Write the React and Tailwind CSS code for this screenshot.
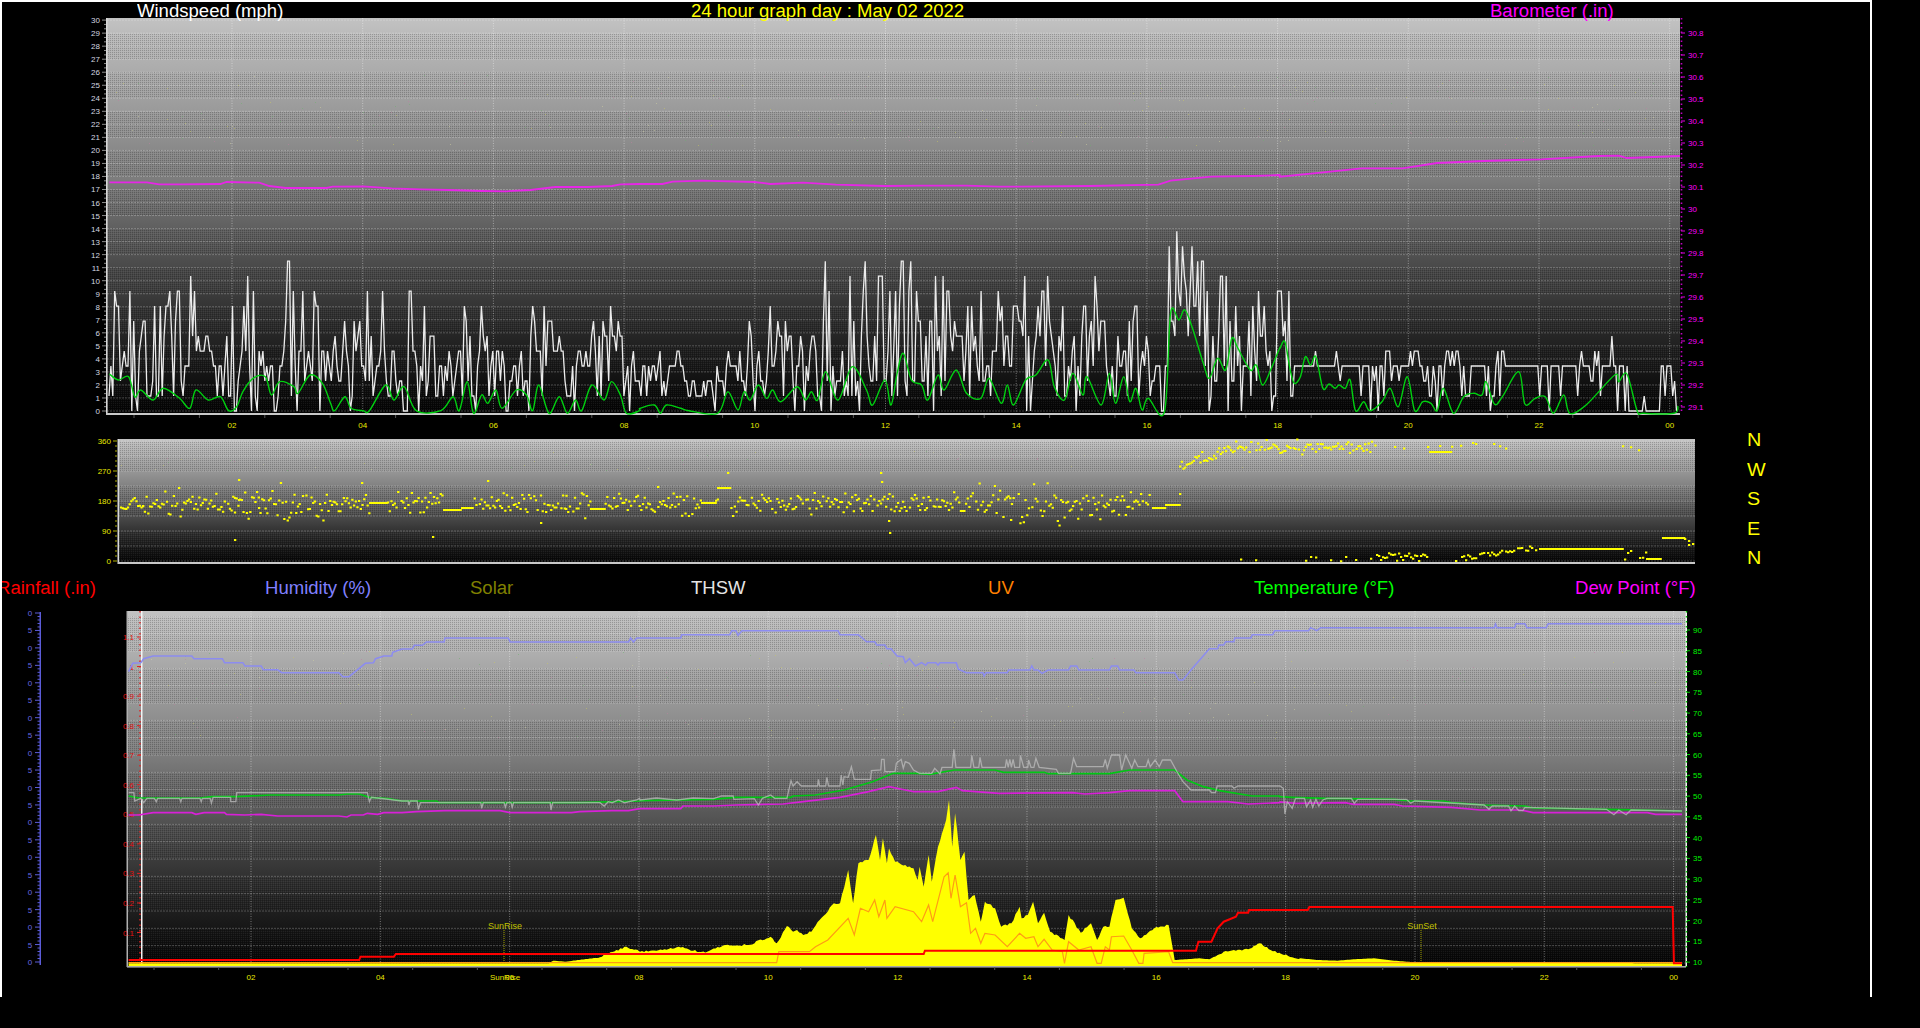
// 24 hour weather graph: wind / barometer, wind direction, and the temperature + solar panel.
// Series below were read off the picture, so they are stored in zoomed crop coordinates.
function crop(cx, cy, str) {
  return str
    .trim()
    .split(/\s+/)
    .map((p) => {
      const [a, b] = p.split(',').map(Number);
      return [cx + a / 2.45, cy + b / 3];
    });
}
const line = (pts) => pts.map(([x, y]) => `${x.toFixed(1)},${y.toFixed(1)}`).join(' ');

function rng(seed) {
  let a = seed;
  return () => {
    a = (a + 0x6d2b79f5) | 0;
    let t = Math.imul(a ^ (a >>> 15), 1 | a);
    t = (t + Math.imul(t ^ (t >>> 7), 61 | t)) ^ t;
    return ((t ^ (t >>> 14)) >>> 0) / 4294967296;
  };
}

// Catmull-Rom through the points, the average wind is a soft curve
function smooth(pts) {
  let d = `M${pts[0][0].toFixed(1)} ${pts[0][1].toFixed(1)}`;
  for (let i = 0; i < pts.length - 1; i++) {
    const p0 = pts[Math.max(0, i - 1)];
    const p1 = pts[i];
    const p2 = pts[i + 1];
    const p3 = pts[Math.min(pts.length - 1, i + 2)];
    const c1 = [p1[0] + (p2[0] - p0[0]) / 6, p1[1] + (p2[1] - p0[1]) / 6];
    const c2 = [p2[0] - (p3[0] - p1[0]) / 6, p2[1] - (p3[1] - p1[1]) / 6];
    d += `C${c1[0].toFixed(1)} ${c1[1].toFixed(1)} ${c2[0].toFixed(1)} ${c2[1].toFixed(1)} ${p2[0].toFixed(1)} ${p2[1].toFixed(1)}`;
  }
  return d;
}

// subdivide a long segment and jitter it, for the spiky solar outline
function roughen(pts, amp, seed) {
  const r = rng(seed);
  const out = [];
  for (let i = 0; i < pts.length - 1; i++) {
    const [x0, y0] = pts[i];
    const [x1, y1] = pts[i + 1];
    const n = Math.max(1, Math.round((x1 - x0) / 2));
    for (let k = 0; k < n; k++) {
      const t = k / n;
      const y = y0 + (y1 - y0) * t;
      const j = k === 0 || y > 958 ? 0 : (r() - 0.5) * amp;
      out.push([x0 + (x1 - x0) * t, y + j]);
    }
  }
  out.push(pts[pts.length - 1]);
  return out;
}

// top panel
const windAvg = [
  ...crop(0, 0, `268,1122 290,1140 315,1130 330,1190 345,1170 375,1200 400,1165 440,1195 465,1225 480,1170 510,1200 540,1190 560,1232 580,1220 595,1175 620,1135 650,1130 665,1185 685,1145 720,1160 730,1180 760,1125 790,1150 810,1210 820,1232 845,1190 860,1225 890,1232 905,1232 945,1155 965,1200 990,1160 1020,1232 1080,1232 1110,1190 1125,1232 1145,1145 1160,1240 1180,1185 1195,1210 1215,1170 1230,1225 1265,1170 1290,1185 1305,1232 1320,1155 1345,1240 1370,1190 1390,1240 1410,1200 1425,1232 1450,1155 1480,1200 1498,1145 1520,1185 1535,1240 1567,1232`),
  ...crop(640, 170, `0,715 35,705 50,730 65,705 100,715 120,722 190,730 215,665 240,720 255,665 270,690 290,645 310,685 325,660 345,695 385,650 405,690 420,665 435,690 455,605 485,690 520,590 555,660 570,705 600,630 615,705 630,610 645,550 665,630 690,645 705,690 730,615 745,660 775,600 800,670 835,685 855,625 885,700 900,645 915,705 945,630 970,615 1000,570 1015,650 1040,690 1060,610 1085,675 1095,620 1130,705 1150,610 1165,700 1185,620 1200,695 1215,655 1230,720 1245,685 1285,725 1300,430 1320,450 1335,420 1355,480 1380,580 1395,625 1415,565 1435,600 1450,505 1465,535 1495,600 1510,585 1525,645 1545,600 1567,535`),
  ...crop(1280, 0, `0,1045 12,1025 25,1110 35,1150 50,1130 62,1070 75,1095 88,1070 105,1165 120,1152 135,1165 145,1155 160,1165 172,1140 185,1232 205,1205 220,1232 250,1205 270,1165 290,1220 312,1130 330,1232 350,1205 370,1210 385,1232 400,1165 425,1240 450,1190 475,1180 495,1185 505,1145 525,1212 545,1190 585,1115 600,1212 625,1195 650,1190 670,1240 695,1185 710,1240 750,1215 820,1125 830,1145 850,1122 875,1232 890,1240 965,1240 975,1218`),
];
const baro = [
  ...crop(0, 0, `268,547 360,547 390,553 440,553 540,552 555,546 635,548 660,558 700,564 800,564 815,560 890,559 960,565 1030,568 1100,570 1180,573 1240,574 1300,570 1360,561 1440,561 1500,558 1520,553 1567,552`),
  ...crop(640, 170, `0,42 55,42 80,35 150,32 280,36 320,42 400,38 480,44 600,48 680,47 800,47 880,50 1100,48 1270,44 1300,32 1400,20 1500,18 1567,15`),
  ...crop(1280, 0, `0,530 100,518 200,505 300,505 385,489 500,483 640,478 780,468 830,467 850,474 980,468`),
];
// highest gust per half hour
const gustEnv = [11.5, 9.2, 10.4, 7, 10.4, 11.5, 9.2, 8.1, 9.2, 9.2, 5.8, 9.2, 8.1, 8.1, 5.8, 8.1, 4.6, 4.6, 3.45, 8.1, 8.1, 7, 12.6, 11.5, 12.6, 10.4, 9.2, 9.2, 11.5, 9.2, 10.4, 8.1, 15, 13.8, 11.5, 10.4, 10.4, 4.6, 3.45, 4.6, 4.6, 4.6, 4.6, 4.6, 3.45, 4.6, 5.8, 1.2];
const gusts = (() => {
  const r = rng(71);
  const out = [];
  let prev = 3.45;
  for (let x = 109; x < 1678; x += 1.9) {
    const h = (x - 101.2) / 65.37;
    let env = gustEnv[Math.min(47, Math.floor(h * 2))];
    if (h > 16 && h < 16.33) env = 4.6;
    if (h > 23.85) env = 3.45;
    const p = r();
    let v;
    if (h > 18.35 && h < 19.1) {
      // steady stretch with a few spikes
      v = p < 0.82 ? 3.45 : p < 0.92 ? 4.6 : 2.3;
    } else if (h >= 19.1) {
      v = p < 0.42 ? Math.min(env, 3.45) : p < 0.52 ? env : p < 0.8 ? r() * 2.3 : prev;
    } else if (p < 0.42) {
      v = env * (0.45 + 0.55 * r());
    } else if (p < 0.9) {
      v = r() * Math.min(4.6, env);
    } else {
      v = Math.min(prev, env);
    }
    v = Math.min(v, env);
    // the burst after 16:20 stays high
    if (h > 16.35 && h < 16.8) v = Math.max(v, 5.75 + r() * 3);
    if (h > 23.4 && h <= 23.85) v = r() < 0.04 ? 1.15 : 0;
    v = Math.round(v / 1.15) * 1.15;
    prev = v;
    out.push([x, 411 - 13.03 * v]);
  }
  return out;
})();

// middle panel: one yellow point per reading
const dirDots = (() => {
  const r = rng(9);
  const g = () => (r() + r() + r() - 1.5) / 0.5;
  const out = [];
  const flat = [
    [369, 386, 502],
    [443, 461, 509],
    [461, 472, 507],
    [590, 604, 508],
    [701, 715, 502],
    [717, 730, 487],
    [1152, 1165, 507],
    [1165, 1179, 504],
    [1429, 1451, 451],
    [1539, 1623, 548],
    [1646, 1660, 558],
    [1662, 1684, 537],
  ];
  const inFlat = (x) => flat.some(([a, b]) => x >= a && x <= b);
  for (let x = 120; x < 1150; x += 1.7) {
    if (inFlat(x) || r() < 0.06) continue;
    const spread = x > 240 && x < 330 ? 9 : x > 970 && x < 1100 ? 9.5 : 5.6;
    out.push([x, 503 + g() * spread]);
  }
  for (const [a, b, y] of flat) for (let x = a; x < b; x += 1.5) out.push([x, y]);
  for (let x = 1179; x < 1240; x += 1.7) out.push([x, 464 - ((x - 1179) / 61) * 20 + g() * 3]);
  for (let x = 1240; x < 1376; x += 1.7) if (r() > 0.15) out.push([x, 446 + g() * 3.2]);
  for (let x = 1376; x < 1528; x += 3) if (r() < 0.28) out.push([x, 442 + r() * 8]);
  for (let x = 1622; x < 1640; x += 4) if (r() < 0.5) out.push([x, 444 + r() * 6]);
  for (let x = 1230; x < 1265; x += 5) if (r() < 0.6) out.push([x, 558 + r() * 3]);
  for (let x = 1300; x < 1376; x += 5) if (r() < 0.5) out.push([x, 556 + r() * 5]);
  for (let x = 1376; x < 1428; x += 2) out.push([x, 561 - r() * (x > 1395 && x < 1410 ? 14 : 9)]);
  for (let x = 1455; x < 1538; x += 2) if (r() > 0.15) out.push([x, 561 - ((x - 1455) / 83) * 12 - r() * 5]);
  for (let x = 1624; x < 1646; x += 3) if (r() < 0.7) out.push([x, 561 - r() * 12]);
  out.push([1684, 538], [1688, 540], [1692, 543], [1688, 544]);
  const odd = [[142, 505], [178, 487], [234, 497], [234, 539], [238, 499], [238, 479], [258, 507], [361, 482], [432, 536], [487, 480], [565, 508], [540, 522], [657, 486], [727, 472], [880, 472], [881, 481], [889, 532], [888, 520], [1010, 519], [1179, 493]];
  return out.concat(odd);
})();
const dotsPath = dirDots.map(([x, y]) => `M${x.toFixed(1)} ${y.toFixed(1)}h2.3v2h-2.3z`).join('');

// bottom panel
const humidity = [
  ...crop(0, 420, `315,755 325,730 345,728 352,716 375,708 470,708 475,716 545,716 550,728 595,728 600,738 640,738 645,749 680,749 690,758 830,758 840,770 855,770 880,745 895,730 915,728 920,716 940,708 960,708 962,697 985,687 1010,687 1015,676 1035,676 1045,666 1088,666 1090,654 1245,654 1250,666 1540,666 1545,654 1552,666 1560,654 1567,654`),
  ...crop(640, 600, `0,114 100,114 102,104 220,104 225,92 235,92 240,106 250,92 485,92 490,104 535,104 555,125 575,125 580,135 600,135 605,146 615,146 630,168 645,170 650,188 660,176 675,198 690,188 700,196 705,188 725,188 730,195 735,188 775,188 780,208 800,218 840,218 843,228 848,218 900,218 903,210 955,210 960,198 965,210 975,210 985,220 1000,210 1050,210 1055,198 1070,198 1075,210 1150,210 1155,198 1170,198 1175,210 1210,210 1215,218 1310,218 1320,240 1330,240 1350,210 1360,196 1375,175 1395,146 1415,146 1418,135 1430,135 1435,125 1455,125 1457,114 1497,114 1500,104 1550,104 1555,92 1567,92`),
  ...crop(1280, 420, `0,632 70,632 75,623 90,632 100,623 525,623 528,612 532,623 575,623 578,611 600,611 605,623 652,623 657,611 985,611`),
];
const temp = [
  ...crop(0, 720, `315,228 340,234 490,234 520,230 580,230 660,225 830,225 850,222 880,222 905,232 950,236 985,243 1070,243 1075,248 1420,248 1567,243`),
  ...crop(640, 720, `0,242 180,238 230,232 370,232 375,228 430,225 500,210 570,185 620,160 680,160 710,163 770,150 870,150 890,157 990,157 1000,161 1150,161 1200,150 1310,150 1340,180 1380,200 1420,212 1500,228 1567,228`),
  ...crop(1280, 720, `0,230 30,232 110,235 280,238 320,243 400,243 420,248 500,255 600,258 620,264 800,268 890,270 985,273`),
];
const thsw = [
  ...crop(0, 720, `315,218 328,218 330,243 345,235 352,248 360,235 378,235 383,245 386,235 440,235 443,245 446,235 490,235 493,245 496,235 515,235 518,250 522,232 565,232 565,245 578,245 580,218 900,218 905,245 910,232 985,243 1000,243 1002,255 1005,243 1022,243 1025,268 1030,248 1178,248 1180,265 1184,248 1235,248 1238,262 1242,248 1252,248 1255,262 1258,248 1348,248 1350,270 1354,248 1470,248 1480,258 1490,245 1500,248 1515,240 1530,248 1560,240 1567,235`),
  ...crop(640, 720, `0,240 40,234 90,240 130,234 180,236 200,228 228,228 230,238 280,236 290,255 300,235 320,225 330,235 360,235 370,182 375,198 385,185 395,198 435,198 437,178 440,198 455,198 458,172 462,198 490,198 493,165 497,195 500,170 510,172 518,140 525,178 565,178 567,152 590,150 592,118 598,118 600,155 625,155 628,130 640,118 645,145 650,125 660,130 670,150 685,160 715,160 722,145 735,162 740,142 765,142 769,88 774,142 810,142 813,106 818,142 830,142 833,112 838,142 895,142 898,118 902,142 906,118 910,142 914,118 918,142 930,142 932,106 940,142 950,142 952,120 958,142 965,142 970,115 978,142 1020,148 1025,160 1055,160 1062,115 1070,140 1135,140 1140,118 1145,145 1155,105 1175,105 1180,150 1190,105 1205,145 1212,120 1220,140 1240,140 1245,120 1250,140 1262,120 1272,140 1280,120 1300,120 1320,165 1330,185 1350,210 1395,210 1400,218 1410,218 1414,198 1450,198 1455,205 1465,198 1567,198`),
  ...crop(1280, 720, `0,198 8,205 12,282 18,245 30,265 38,235 60,235 65,260 75,240 80,262 88,238 95,258 105,240 115,235 175,235 182,250 190,238 310,238 320,250 330,243 500,255 512,268 520,258 560,258 566,272 575,258 585,272 595,272 600,262 800,268 818,284 830,270 848,284 860,270 985,273`),
];
const dew = [
  ...crop(0, 720, `315,285 340,285 375,278 470,278 480,283 500,278 550,278 555,283 600,285 640,283 680,288 830,288 850,291 860,285 890,285 900,280 925,283 940,278 985,278 1020,275 1090,272 1225,272 1250,278 1400,278 1420,275 1500,272 1540,272 1567,266`),
  ...crop(640, 720, `0,266 100,266 105,258 180,258 235,255 350,252 400,245 490,232 560,215 610,200 650,210 670,215 730,215 775,202 790,212 880,220 1060,218 1090,222 1150,218 1200,212 1310,212 1330,245 1440,245 1490,252 1567,248`),
  ...crop(1280, 720, `0,246 40,250 160,248 180,253 280,253 300,258 420,262 490,270 590,270 620,278 900,278 920,283 985,283`),
];
const rain = [
  ...crop(0, 720, `315,720 880,720 883,710 965,710 970,702 1567,702`),
  ...crop(640, 720, `0,702 695,702 698,692 1362,692 1368,665 1400,665 1415,625 1430,605 1460,590 1465,578 1490,578 1492,570 1567,570`),
  ...crop(1280, 720, `0,570 68,570 72,561 962,561 965,730 985,730`),
];
const solar = roughen(
  [
    ...crop(0, 720, `315,738 315,730 1345,730 1355,722 1385,725 1470,712 1510,690 1535,680 1567,695`),
    ...crop(640, 720, `0,695 60,688 95,680 130,692 165,695 210,675 265,675 320,650 335,670 360,618 375,635 385,630 400,645 420,635 440,600 475,550 490,550 510,450 522,550 535,430 560,420 578,345 588,420 595,355 605,430 610,385 625,425 670,445 680,480 685,440 695,500 707,405 715,485 730,380 740,340 750,300 757,240 765,380 772,280 785,420 795,395 805,540 820,525 835,605 845,545 870,565 885,620 910,610 930,560 935,595 950,585 963,545 975,610 990,578 1005,635 1040,660 1050,585 1080,638 1105,610 1120,660 1135,620 1150,620 1165,540 1185,533 1205,625 1225,655 1260,625 1295,615 1310,720 1370,715 1395,718 1430,695 1490,688 1518,670 1545,690 1567,698`),
    ...crop(1280, 720, `0,700 30,712 90,720 140,722 180,718 230,715 280,722 330,727 985,730`),
  ],
  2.2,
  33
).concat(crop(1280, 720, `985,738`));
const uv = [
  ...crop(0, 720, `315,728 1567,728`),
  ...crop(640, 720, `0,728 335,728 340,695 415,695 430,680 460,660 510,595 525,645 540,565 560,575 575,540 585,590 600,540 605,595 625,560 670,575 690,605 707,555 717,605 745,470 755,458 762,535 772,465 785,560 800,548 810,640 822,625 835,670 845,640 870,645 900,680 930,640 945,655 965,650 975,680 990,658 1010,690 1035,695 1040,730 1050,665 1075,690 1105,680 1120,730 1130,730 1140,680 1150,690 1155,650 1185,648 1205,690 1222,730 1232,730 1235,700 1295,695 1305,728 1567,728`),
  ...crop(1280, 720, `0,728 985,728`),
];

const hours = ['02', '04', '06', '08', '10', '12', '14', '16', '18', '20', '22', '00'];
const range = (n) => Array.from({ length: n }, (_, i) => i);

function specks(seed, x, y, w, h, n) {
  const r = rng(seed);
  return range(n).map((i) => (
    <rect
      key={i}
      x={(x + r() * w).toFixed(0)}
      y={(y + r() * h).toFixed(0)}
      width="1"
      height="1"
      fill={['#c8c860', '#70b070', '#c080a0', '#d0d0a0'][i % 4]}
      opacity="0.55"
    />
  ));
}

// gradient background, dither bands and the grid of one plot
function Plot({ id, x, y, w, h, rows, vlines = [] }) {
  const bands = rows.slice(0, -1).map((r, i) => ({ y0: rows[i], y1: rows[i + 1], i }));
  return (
    <g>
      <defs>
        <linearGradient id={`${id}-bg`} x1="0" y1="0" x2="0" y2="1">
          <stop offset="0%" stopColor="#c2c2c2" />
          <stop offset="40%" stopColor="#7e7e7e" />
          <stop offset="60%" stopColor="#505050" />
          <stop offset="80%" stopColor="#262626" />
          <stop offset="100%" stopColor="#030303" />
        </linearGradient>
        <pattern id={`${id}-dots`} width="2" height="2" patternUnits="userSpaceOnUse">
          <rect width="1" height="1" fill="#000" opacity="0.2" />
          <rect x="1" y="1" width="1" height="1" fill="#fff" opacity="0.06" />
        </pattern>
      </defs>
      <rect x={x} y={y} width={w} height={h} fill={`url(#${id}-bg)`} />
      {bands.map((b) =>
        b.i % 3 !== 2 ? (
          <rect
            key={b.i}
            x={x}
            y={Math.min(b.y0, b.y1)}
            width={w}
            height={Math.abs(b.y1 - b.y0)}
            fill={`url(#${id}-dots)`}
          />
        ) : null
      )}
      {rows.map((ry, i) => (
        <line key={i} x1={x} x2={x + w} y1={ry} y2={ry} stroke="#fff" strokeOpacity="0.24" strokeDasharray="2 1" />
      ))}
      {vlines.map((vx, i) => (
        <line key={i} x1={vx} x2={vx} y1={y} y2={y + h} stroke="#fff" strokeOpacity="0.4" strokeDasharray="1 1.5" />
      ))}
    </g>
  );
}

function HourLabels({ at, y, color = '#e8e800' }) {
  return hours.map((t, i) => (
    <text key={i} x={at(i)} y={y} textAnchor="middle" fill={color} className="text-[8px]">
      {t}
    </text>
  ));
}

function WindPanel() {
  const rows = range(31).map((v) => 411 - 13.03 * v);
  const hx = (i) => 232 + 130.7 * i;
  return (
    <svg viewBox="2 18 1868 418" className="block h-[418px] w-[1868px] shrink-0">
      <Plot id="wind" x={107} y={18} w={1573} h={395} rows={rows} vlines={range(12).map(hx)} />
      {specks(4, 108, 75, 1570, 70, 260)}
      <rect x={106} y={18} width={1.6} height={397} fill="#d8d8d8" />
      <rect x={106} y={413} width={1574} height={2} fill="#c8c8c8" />
      {range(91).map((i) => (
        <line key={i} x1={i % 3 === 0 ? 102 : 104} x2={106} y1={411 - (13.03 / 3) * i} y2={411 - (13.03 / 3) * i} stroke="#8a8a8a" />
      ))}
      {range(24).map((i) => (
        <line key={i} x1={134 + 32.7 * 2 * i} x2={134 + 32.7 * 2 * i} y1={415} y2={418} stroke="#555" />
      ))}
      {range(31).map((v) => (
        <text key={v} x={100} y={411 - 13.03 * v + 3} textAnchor="end" fill="#d4d8e0" className="text-[8px]">
          {v}
        </text>
      ))}
      {['30.8', '30.7', '30.6', '30.5', '30.4', '30.3', '30.2', '30.1', '30', '29.9', '29.8', '29.7', '29.6', '29.5', '29.4', '29.3', '29.2', '29.1'].map((t, i) => (
        <g key={t}>
          <line x1={1681} x2={1685} y1={33 + 22 * i} y2={33 + 22 * i} stroke="#e000e0" />
          <text x={1688} y={36 + 22 * i} fill="#ff00ff" className="text-[8px]">
            {t}
          </text>
        </g>
      ))}
      <line x1={1681.5} x2={1681.5} y1={18} y2={413} stroke="#c000c0" strokeDasharray="1.5 3" strokeWidth="1.6" />
      <HourLabels at={hx} y={428} />
      <polyline points={line(gusts)} fill="none" stroke="#ececec" strokeWidth="1.3" />
      <path d={smooth(windAvg)} fill="none" stroke="#00d010" strokeWidth="1.4" />
      <polyline points={line(baro)} fill="none" stroke="#e626e6" strokeWidth="1.8" />
    </svg>
  );
}

function DirectionPanel() {
  const labels = [
    ['360', 441],
    ['270', 471],
    ['180', 501],
    ['90', 531],
    ['0', 561],
  ];
  const rows = range(9).map((i) => 561 - 15 * i);
  return (
    <svg viewBox="2 436 1740 136" className="block h-[136px] w-[1740px] shrink-0">
      <Plot id="dir" x={118} y={439} w={1577} h={124} rows={rows} />
      {specks(8, 119, 450, 1570, 20, 70)}
      <rect x={117.5} y={439} width={1.6} height={125} fill="#d8d8d8" />
      <rect x={118} y={562} width={1577} height={2} fill="#c8c8c8" />
      {range(25).map((i) => (
        <line key={i} x1={i % 6 === 0 ? 113 : 115} x2={117} y1={561 - 5 * i} y2={561 - 5 * i} stroke="#b0b000" />
      ))}
      {labels.map(([t, y]) => (
        <text key={t} x={111} y={y + 3} textAnchor="end" fill="#e8e800" className="text-[8px]">
          {t}
        </text>
      ))}
      <path d={dotsPath} fill="#ffff00" />
    </svg>
  );
}

function TempPanel() {
  const rows = range(21).map((i) => 963 - 17.33 * i);
  const hx = (i) => 251 + 129.33 * i;
  const rainLabels = ['1.1', '1', '0.9', '0.8', '0.7', '0.6', '0.5', '0.4', '0.3', '0.2', '0.1'];
  const tempLabels = range(17).map((i) => 90 - 5 * i);
  return (
    <svg viewBox="2 604 1868 385" className="block h-[385px] w-[1868px] shrink-0">
      <Plot id="temp" x={127} y={611} w={1559} h={356} rows={rows} vlines={range(12).map(hx)} />
      {specks(12, 128, 650, 1555, 90, 240)}
      <rect x={126.5} y={611} width={1.5} height={356} fill="#b0b0b0" />
      <rect x={127} y={966} width={1559} height={1.6} fill="#a8a8a8" />
      <rect x={141} y={611} width={1.5} height={354} fill="#f4f4f4" />
      <line x1={140} x2={140} y1={611} y2={965} stroke="#e02020" strokeDasharray="1.5 4" strokeWidth="1.4" />
      {rainLabels.map((t, i) => (
        <g key={t}>
          <line x1={137} x2={141} y1={637 + 29.55 * i} y2={637 + 29.55 * i} stroke="#e02020" />
          <text x={134} y={640 + 29.55 * i} textAnchor="end" fill="#e01010" className="text-[8px]">
            {t}
          </text>
        </g>
      ))}
      {/* humidity axis, the tens are cut off in the original */}
      <rect x={39.5} y={612} width={1.5} height={353} fill="#5c5cd8" />
      {range(101).map((i) => (
        <line key={i} x1={i % 5 === 0 ? 35 : 37.5} x2={40} y1={962 - 3.49 * i} y2={962 - 3.49 * i} stroke="#5c5cd8" />
      ))}
      {range(21).map((i) => (
        <text key={i} x={30} y={965 - 17.45 * i} textAnchor="middle" fill="#6a6ae0" className="text-[8px]">
          {i % 2 === 0 ? '0' : '5'}
        </text>
      ))}
      <rect x={1685.5} y={611} width={1.5} height={356} fill="#f0f0f0" />
      <line x1={1686.5} x2={1686.5} y1={611} y2={967} stroke="#00d000" strokeDasharray="1.5 3.5" strokeWidth="1.4" />
      {tempLabels.map((t, i) => (
        <g key={t}>
          <line x1={1687} x2={1690} y1={630 + 20.76 * i} y2={630 + 20.76 * i} stroke="#00d000" />
          <text x={1693} y={633 + 20.76 * i} fill="#00f000" className="text-[8px]">
            {t}
          </text>
        </g>
      ))}
      {range(24).map((i) => (
        <line key={i} x1={154 + 64.67 * i} x2={154 + 64.67 * i} y1={967} y2={970} stroke="#555" />
      ))}
      <HourLabels at={hx} y={980} />
      <text x={505} y={980} textAnchor="middle" fill="#e8e800" className="text-[8px]">
        SunRise
      </text>
      <line x1={504} x2={504} y1={930} y2={965} stroke="#a0a000" strokeDasharray="1 1" />
      <line x1={1421} x2={1421} y1={930} y2={965} stroke="#a0a000" strokeDasharray="1 1" />
      <text x={505} y={929} textAnchor="middle" fill="#c0c000" className="text-[9px]">
        SunRise
      </text>
      <text x={1422} y={929} textAnchor="middle" fill="#c0c000" className="text-[9px]">
        SunSet
      </text>
      <polygon points={line(solar)} fill="#ffff00" />
      <polyline points={line(uv)} fill="none" stroke="#ff9c14" strokeWidth="1.2" />
      <polyline points={line(humidity)} fill="none" stroke="#8c8cf0" strokeWidth="1.5" />
      <polyline points={line(temp)} fill="none" stroke="#00c814" strokeWidth="1.7" />
      <polyline points={line(dew)} fill="none" stroke="#d820d8" strokeWidth="1.7" />
      <polyline points={line(thsw)} fill="none" stroke="#c0c0c0" strokeOpacity="0.72" strokeWidth="1.3" />
      <polyline points={line(rain)} fill="none" stroke="#ff0000" strokeWidth="2" />
    </svg>
  );
}

// the source image is stretched sideways a little, so the titles are too
function Title({ color, width, className = '', children }) {
  return (
    <span
      className={`block shrink-0 origin-left scale-x-[1.03] whitespace-nowrap text-[18px] leading-none ${color} ${className}`}
      style={{ width }}
    >
      {children}
    </span>
  );
}

export default function App() {
  return (
    <div className="h-[1028px] w-[1920px] overflow-hidden bg-black font-['Liberation_Sans',Arial,sans-serif]">
      <div className="h-[997px] w-[1872px] overflow-hidden border-x-2 border-t-2 border-white">
        <div className="flex h-[16px] items-start">
          <Title color="text-white" width={152} className="ml-[135px]">
            Windspeed (mph)
          </Title>
          <Title color="text-[#ffff00]" width={273} className="ml-[402px]">
            24 hour graph day : May 02 2022
          </Title>
          <Title color="text-[#ff00ff]" width={124} className="ml-[526px]">
            Barometer (.in)
          </Title>
        </div>
        <WindPanel />
        <div className="flex h-[136px]">
          <DirectionPanel />
          <div className="-mt-[10px] ml-[5px] flex flex-col text-[18px] leading-[29.5px] text-[#ffff00]">
            {['N', 'W', 'S', 'E', 'N'].map((d, i) => (
              <span key={i} className="block origin-left scale-x-[1.1]">
                {d}
              </span>
            ))}
          </div>
        </div>
        <div className="flex h-[32px] items-center">
          <Title color="text-[#ff0000]" width={102} className="-ml-[5px]">
            Rainfall (.in)
          </Title>
          <Title color="text-[#8080ff]" width={104} className="ml-[166px]">
            Humidity (%)
          </Title>
          <Title color="text-[#808000]" width={43} className="ml-[101px]">
            Solar
          </Title>
          <Title color="text-[#e4e4e4]" width={56} className="ml-[178px]">
            THSW
          </Title>
          <Title color="text-[#ff8000]" width={26} className="ml-[241px]">
            UV
          </Title>
          <Title color="text-[#00ff00]" width={142} className="ml-[240px]">
            Temperature (°F)
          </Title>
          <Title color="text-[#ff00ff]" width={120} className="ml-[179px]">
            Dew Point (°F)
          </Title>
        </div>
        <TempPanel />
      </div>
    </div>
  );
}
